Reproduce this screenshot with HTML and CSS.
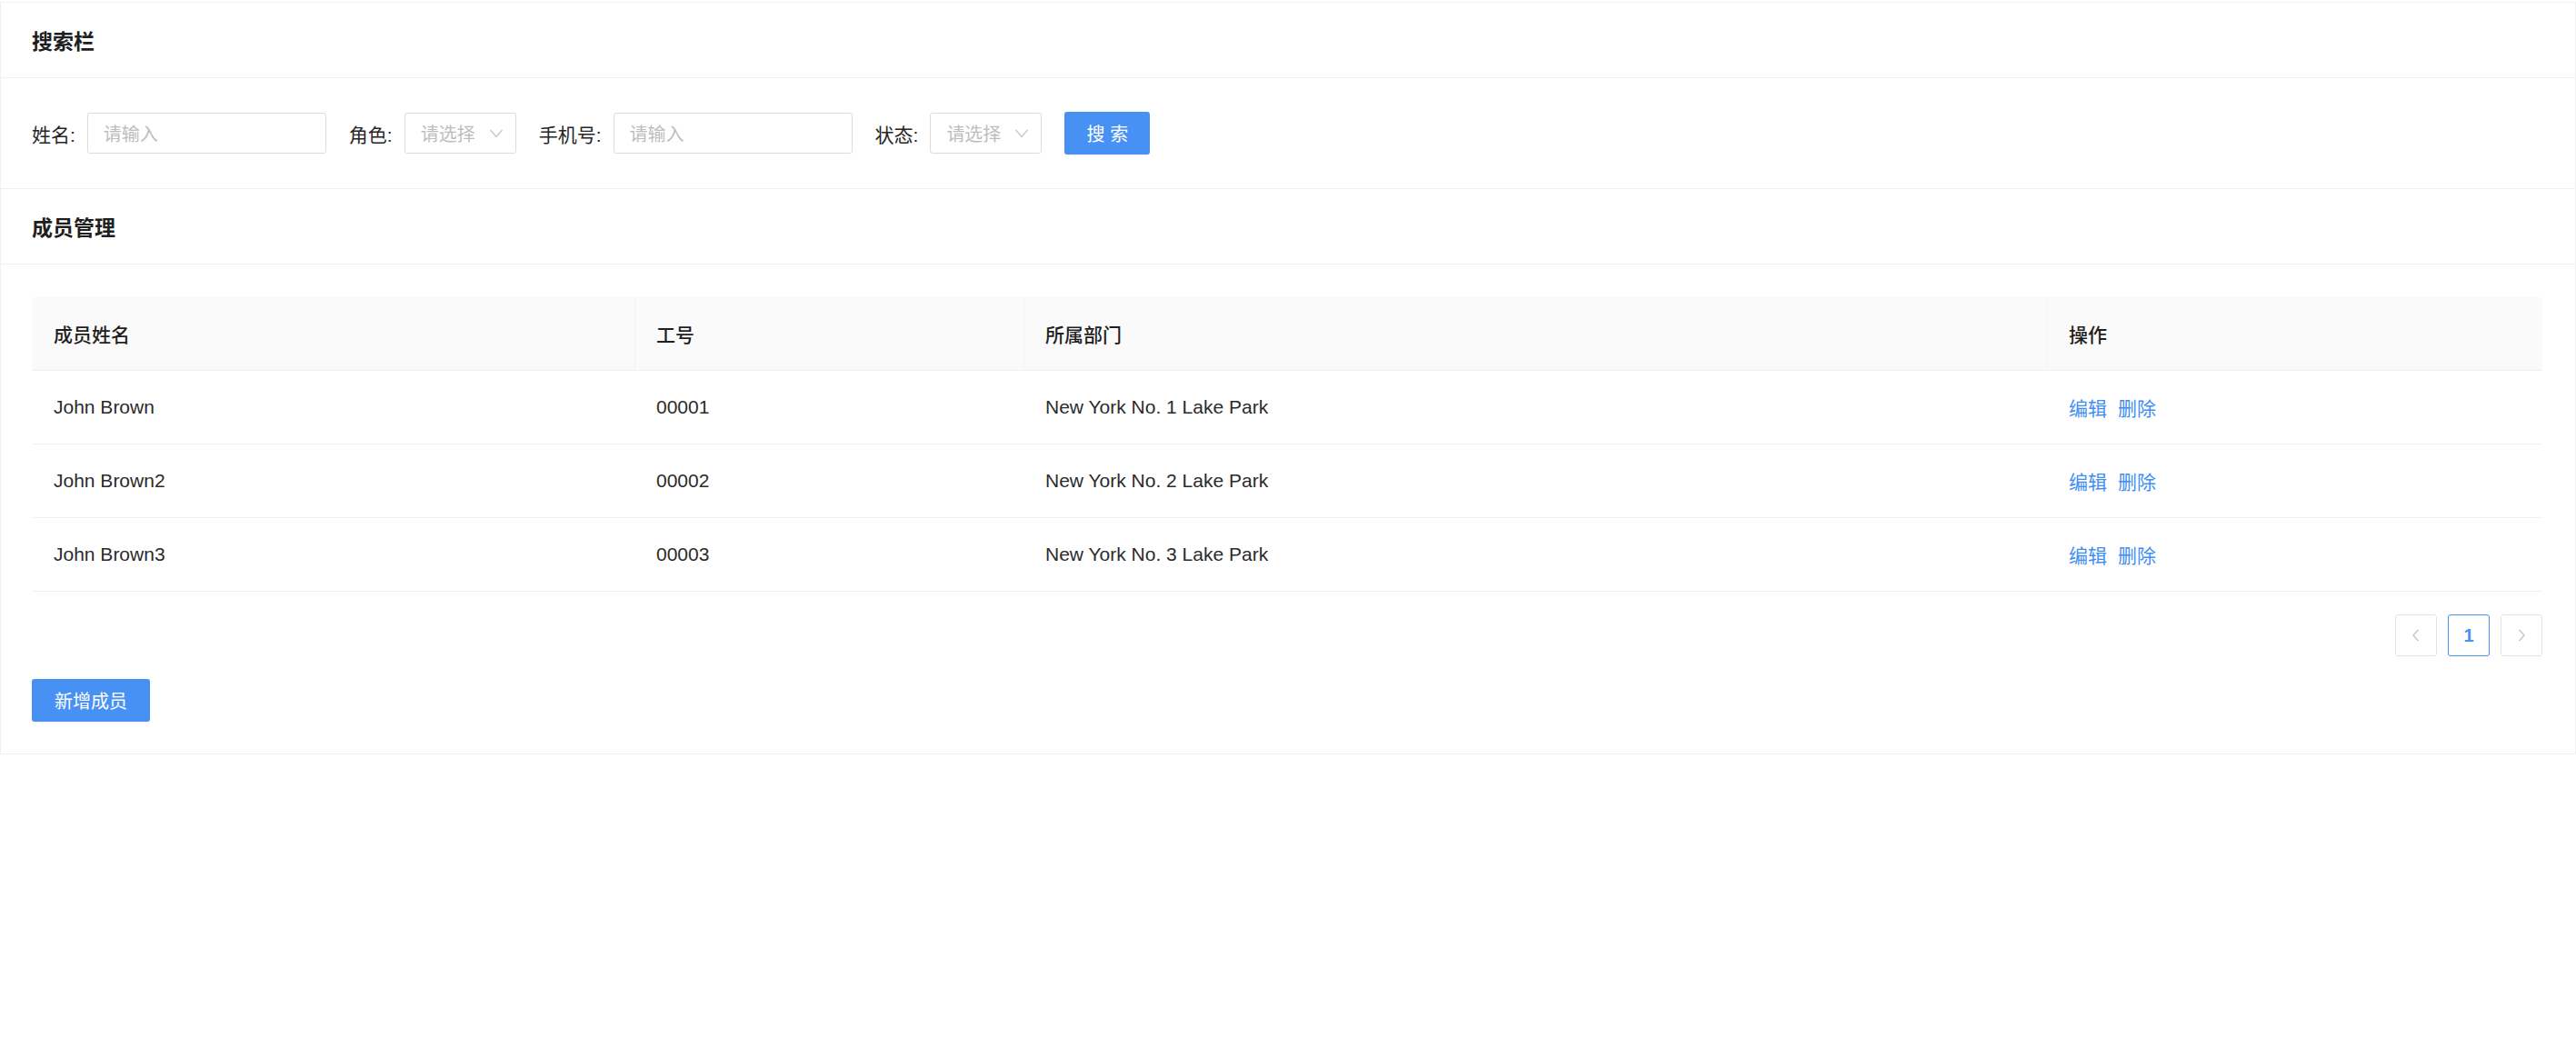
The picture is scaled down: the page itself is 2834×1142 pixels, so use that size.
FILE: index.html
```html
<!DOCTYPE html>
<html lang="zh">
<head>
<meta charset="utf-8">
<title>成员管理</title>
<link rel="stylesheet" href="styles.css">
</head>
<body>
<section class="card card-search">
  <div class="card-head">搜索栏</div>
  <div class="card-body">
    <form class="search-form">
      <div class="form-item">
        <label class="label">姓名:</label>
        <div class="input input-wide"><span class="ph">请输入</span></div>
      </div>
      <div class="form-item">
        <label class="label">角色:</label>
        <div class="input select"><span class="ph">请选择</span><svg class="chev" viewBox="0 0 18 18" width="18" height="18"><path d="M2.5 5 L9 12.5 L15.5 5" fill="none" stroke="#c4c4c4" stroke-width="1.2"/></svg></div>
      </div>
      <div class="form-item">
        <label class="label">手机号:</label>
        <div class="input input-wide"><span class="ph">请输入</span></div>
      </div>
      <div class="form-item">
        <label class="label">状态:</label>
        <div class="input select"><span class="ph">请选择</span><svg class="chev" viewBox="0 0 18 18" width="18" height="18"><path d="M2.5 5 L9 12.5 L15.5 5" fill="none" stroke="#c4c4c4" stroke-width="1.2"/></svg></div>
      </div>
      <button type="button" class="btn btn-search">搜 索</button>
    </form>
  </div>
</section>

<section class="card card-list">
  <div class="card-head">成员管理</div>
  <div class="card-body">
    <div class="table">
      <div class="tr thead">
        <div class="th">成员姓名</div>
        <div class="th">工号</div>
        <div class="th">所属部门</div>
        <div class="th">操作</div>
      </div>
      <div class="tr">
        <div class="td">John Brown</div>
        <div class="td">00001</div>
        <div class="td">New York No. 1 Lake Park</div>
        <div class="td actions"><a>编辑</a><a>删除</a></div>
      </div>
      <div class="tr">
        <div class="td">John Brown2</div>
        <div class="td">00002</div>
        <div class="td">New York No. 2 Lake Park</div>
        <div class="td actions"><a>编辑</a><a>删除</a></div>
      </div>
      <div class="tr">
        <div class="td">John Brown3</div>
        <div class="td">00003</div>
        <div class="td">New York No. 3 Lake Park</div>
        <div class="td actions"><a>编辑</a><a>删除</a></div>
      </div>
    </div>
    <div class="pagination">
      <span class="page page-nav"><svg viewBox="0 0 18 18" width="18" height="18"><path d="M11.5 3 L6 9 L11.5 15" fill="none" stroke="#c4c4c4" stroke-width="1.4"/></svg></span>
      <span class="page page-active">1</span>
      <span class="page page-nav"><svg viewBox="0 0 18 18" width="18" height="18"><path d="M6.5 3 L12 9 L6.5 15" fill="none" stroke="#c4c4c4" stroke-width="1.4"/></svg></span>
    </div>
    <button type="button" class="btn btn-add">新增成员</button>
  </div>
</section>
</body>
</html>
```

FILE: styles.css
```css
html, body {
  margin: 0;
  padding: 0;
  background: #ffffff;
}

body {
  font-family: "Liberation Sans", "Noto Sans CJK SC", sans-serif;
  font-size: 21px;
  color: #262626;
}

.card {
  background: #fff;
  border: 1px solid #f0f0f0;
  border-top: none;
}

.card-search {
  border-top: 1px solid #f2f2f2;
  margin-top: 2px;
}

.card-head {
  height: 82px;
  display: flex;
  align-items: center;
  padding: 0 34px;
  font-size: 23px;
  font-weight: 700;
  color: #1f1f1f;
  border-bottom: 1px solid #f0f0f0;
}

.card-search .card-body {
  padding: 37px 34px 37px;
}

.search-form {
  display: flex;
  align-items: center;
  gap: 25px;
  margin: 0;
}

.form-item {
  display: flex;
  align-items: center;
}

.label {
  margin-right: 13px;
  color: #262626;
  font-size: 21px;
}

.input {
  height: 45px;
  box-sizing: border-box;
  border: 1px solid #dcdcdc;
  border-radius: 3px;
  display: flex;
  align-items: center;
  padding: 0 17px;
}

.input-wide {
  width: 263px;
}

.select {
  width: 123px;
  justify-content: space-between;
  padding: 0 12px 0 17px;
}

.ph {
  color: #bdbdbd;
  font-size: 20px;
}

.chev {
  display: block;
}

.btn {
  border: none;
  border-radius: 3px;
  background: #4891f4;
  color: #fff;
  font-family: "Liberation Sans", "Noto Sans CJK SC", sans-serif;
  font-size: 20px;
  cursor: pointer;
  box-shadow: 0 2px 0 rgba(0, 0, 0, 0.03);
}

.btn-search {
  width: 94px;
  height: 47px;
}

.card-list .card-body {
  padding: 36px 36px 35px 34px;
}

.table {
  display: flex;
  flex-direction: column;
}

.tr {
  display: grid;
  grid-template-columns: 663px 428px 1126px 1fr;
  height: 81px;
  border-bottom: 1px solid #f0f0f0;
  box-sizing: border-box;
}

.thead {
  background: #fafafa;
}

.th, .td {
  display: flex;
  align-items: center;
  padding: 0 24px;
  position: relative;
}

.th {
  font-weight: 500;
  color: #1f1f1f;
}

.th + .th::before {
  content: "";
  position: absolute;
  left: 0;
  top: 0;
  bottom: 0;
  width: 1px;
  background: #f3f3f3;
}

.td {
  color: #2b2b2b;
}

.actions {
  gap: 12px;
}

.actions a {
  color: #3f8ef2;
  cursor: pointer;
}

.pagination {
  display: flex;
  justify-content: flex-end;
  gap: 12px;
  margin-top: 25px;
}

.page {
  width: 46px;
  height: 46px;
  box-sizing: border-box;
  border: 1px solid #e4e4e4;
  border-radius: 3px;
  display: flex;
  align-items: center;
  justify-content: center;
  font-size: 20px;
}

.page-active {
  border-color: #4891f4;
  color: #4891f4;
  font-weight: 700;
}

.btn-add {
  display: block;
  margin-top: 25px;
  width: 130px;
  height: 47px;
}
```
